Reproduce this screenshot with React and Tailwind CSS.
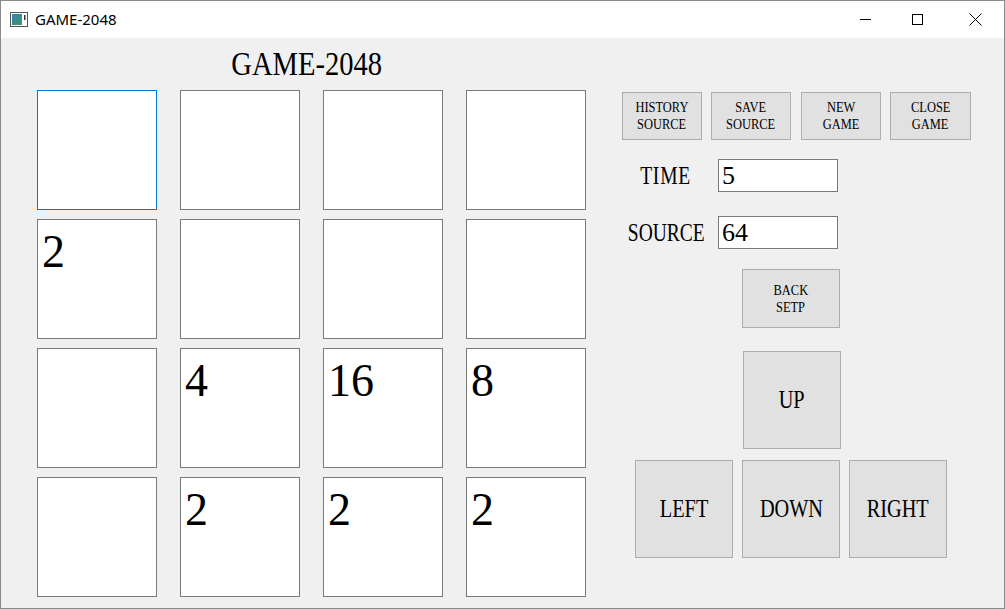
import React from "react";

const serif = { fontFamily: '"Liberation Serif", "Times New Roman", serif' };

function Cond({ children, className = "" }) {
  return <span className={"inline-block whitespace-nowrap " + className}>{children}</span>;
}

function SmallBtn({ children, className = "" }) {
  return (
    <div className={"h-[48px] bg-[#e1e1e1] border border-[#adadad] flex flex-col items-center justify-center text-[15px] leading-[17px] text-black " + className}>
      {children}
    </div>
  );
}

function BigBtn({ children, className = "" }) {
  return (
    <div className={"w-[98px] h-[98px] bg-[#e1e1e1] border border-[#adadad] flex items-center justify-center text-[26px] leading-none text-black " + className}>
      <Cond className="scale-x-[0.78]">{children}</Cond>
    </div>
  );
}

const tiles = ["", "", "", "", "2", "", "", "", "", "4", "16", "8", "", "2", "2", "2"];

export default function App() {
  return (
    <div className="w-[1005px] h-[609px] border border-[#8a8a8a] bg-[#f0f0f0] flex flex-col overflow-hidden" style={serif}>
      {/* title bar */}
      <div className="h-[37px] bg-white flex items-center shrink-0">
        <svg width="18" height="15" viewBox="0 0 18 15" className="ml-[9px]">
          <rect x="0.5" y="0.5" width="17" height="14" fill="#fff" stroke="#555" />
          <defs>
            <linearGradient id="g" x1="0" y1="0" x2="1" y2="1">
              <stop offset="0" stopColor="#3b7fb0" />
              <stop offset="1" stopColor="#3a9a6a" />
            </linearGradient>
          </defs>
          <rect x="2" y="2" width="10" height="11" fill="url(#g)" />
          <rect x="14" y="3" width="1.5" height="5" fill="#333" />
        </svg>
        <span className="ml-[7px] text-[15px] text-black" style={{ fontFamily: '"Noto Sans", "Liberation Sans", sans-serif' }}>GAME-2048</span>
        <div className="ml-auto flex items-center h-full">
          <div className="w-[46px] h-full flex items-center justify-center">
            <div className="w-[11px] h-px bg-black" />
          </div>
          <div className="w-[58px] h-full flex items-center justify-center">
            <div className="w-[11px] h-[11px] border border-black" />
          </div>
          <div className="w-[58px] h-full flex items-center justify-center">
            <svg width="13" height="13" viewBox="0 0 13 13">
              <path d="M0.5 0.5 L12.5 12.5 M12.5 0.5 L0.5 12.5" stroke="#000" strokeWidth="1" />
            </svg>
          </div>
        </div>
      </div>

      {/* body */}
      <div className="flex flex-1">
        {/* left */}
        <div className="pl-[36px] flex flex-col">
          <div className="h-[52px] flex items-center justify-center pr-[10px] text-[34px] leading-none text-black">
            <Cond className="scale-x-[0.84]">GAME-2048</Cond>
          </div>
          <div className="grid grid-cols-[repeat(4,120px)] grid-rows-[repeat(4,120px)] gap-x-[23px] gap-y-[9px]">
            {tiles.map((t, i) => (
              <div
                key={i}
                className={
                  "bg-white border text-[46px] leading-[46px] pl-[4px] pt-[9px] text-black " +
                  (i === 0 ? "border-[#0078d7]" : "border-[#7a7a7a]")
                }
              >
                {t}
              </div>
            ))}
          </div>
        </div>

        {/* right */}
        <div className="ml-[36px] pt-[54px] flex flex-col">
          <div className="flex h-[48px]">
            <SmallBtn className="w-[80px]"><Cond className="scale-x-[0.83]">HISTORY</Cond><Cond className="scale-x-[0.83]">SOURCE</Cond></SmallBtn>
            <SmallBtn className="ml-[9px] w-[80px]"><Cond className="scale-x-[0.83]">SAVE</Cond><Cond className="scale-x-[0.83]">SOURCE</Cond></SmallBtn>
            <SmallBtn className="ml-[10px] w-[80px]"><Cond className="scale-x-[0.83]">NEW</Cond><Cond className="scale-x-[0.83]">GAME</Cond></SmallBtn>
            <SmallBtn className="ml-[9px] w-[81px]"><Cond className="scale-x-[0.83]">CLOSE</Cond><Cond className="scale-x-[0.83]">GAME</Cond></SmallBtn>
          </div>

          <div className="flex items-center h-[33px] mt-[19px]">
            <div className="w-[88px] h-[33px] flex items-center justify-center text-[25px] leading-none text-black">
              <Cond className="scale-x-[0.78] tracking-[1px]">TIME</Cond>
            </div>
            <div className="ml-[8px] w-[120px] h-[33px] bg-white border border-[#7a7a7a] flex items-center pl-[3px] text-[26px] leading-none text-black">5</div>
          </div>

          <div className="flex items-center h-[33px] mt-[24px]">
            <div className="w-[88px] h-[33px] flex items-center justify-center text-[25px] leading-none text-black">
              <Cond className="scale-x-[0.78]">SOURCE</Cond>
            </div>
            <div className="ml-[8px] w-[120px] h-[33px] bg-white border border-[#7a7a7a] flex items-center pl-[3px] text-[26px] leading-none text-black">64</div>
          </div>

          <div className="mt-[20px] ml-[120px] w-[98px] h-[59px] bg-[#e1e1e1] border border-[#adadad] flex flex-col items-center justify-center text-[15px] leading-[17px] text-black">
            <Cond className="scale-x-[0.83]">BACK</Cond>
            <Cond className="scale-x-[0.83]">SETP</Cond>
          </div>

          <BigBtn className="mt-[23px] ml-[121px]">UP</BigBtn>

          <div className="flex mt-[11px] ml-[13px] gap-[9px]">
            <BigBtn>LEFT</BigBtn>
            <BigBtn>DOWN</BigBtn>
            <BigBtn>RIGHT</BigBtn>
          </div>
        </div>
      </div>
    </div>
  );
}
